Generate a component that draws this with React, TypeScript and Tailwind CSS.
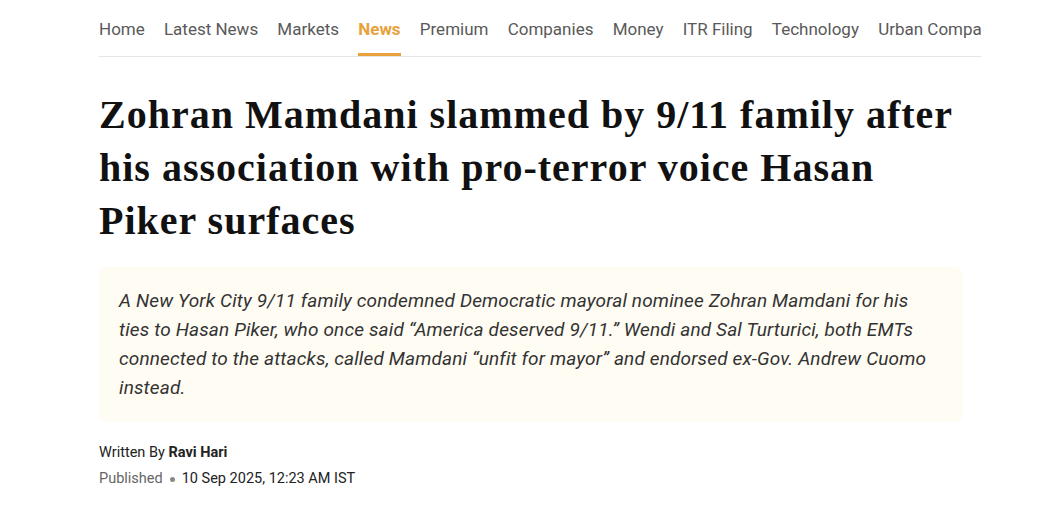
import React from "react";

const navItems = ["Home", "Latest News", "Markets", "News", "Premium", "Companies", "Money", "ITR Filing", "Technology", "Urban Company"];

export default function App() {
  return (
    <div className="w-[1047px] h-[505px] bg-white overflow-hidden" style={{ fontFamily: "Roboto, 'Liberation Sans', sans-serif" }}>
      <div className="ml-[99px] w-[882px]">
        <nav className="flex gap-[19.2px] border-b border-[#e6e6e6] h-[57px] overflow-hidden whitespace-nowrap">
          {navItems.map((n) => (
            <div key={n} className={`relative pt-[18px] text-[17px] leading-[22px] ${n === "News" ? "text-[#e9a23b] font-bold" : "text-[#595959]"}`}>
              {n}
              {n === "News" && <div className="absolute left-0 right-0 bottom-0 h-[3px] bg-[#e9a23b]" />}
            </div>
          ))}
        </nav>
        <h1 className="mt-[31px] w-[882px] text-[40px] tracking-[1px] leading-[53px] font-bold text-[#111]" style={{ fontFamily: "'Liberation Serif', serif" }}>
          Zohran Mamdani slammed by 9/11 family after his association with pro-terror voice Hasan Piker surfaces
        </h1>
        <div className="mt-[20px] w-[864px] rounded-[8px] bg-[#fffcf3] px-[20px] pt-[19px] pb-[20px]">
          <p className="italic text-[19px] tracking-[0.15px] leading-[29px] text-[#333]">
            A New York City 9/11 family condemned Democratic mayoral nominee Zohran Mamdani for his ties to Hasan Piker, who once said “America deserved 9/11.” Wendi and Sal Turturici, both EMTs connected to the attacks, called Mamdani “unfit for mayor” and endorsed ex-Gov. Andrew Cuomo instead.
          </p>
        </div>
        <div className="mt-[21px] text-[14.5px] leading-[20px] text-[#222]">
          Written By <span className="font-bold">Ravi Hari</span>
        </div>
        <div className="mt-[6px] flex items-center text-[14.5px] leading-[20px] text-[#222]">
          <span className="text-[#666]">Published</span>
          <span className="mx-[7px] w-[5px] h-[5px] rounded-full bg-[#888]" />
          <span>10 Sep 2025, 12:23 AM IST</span>
        </div>
      </div>
    </div>
  );
}
